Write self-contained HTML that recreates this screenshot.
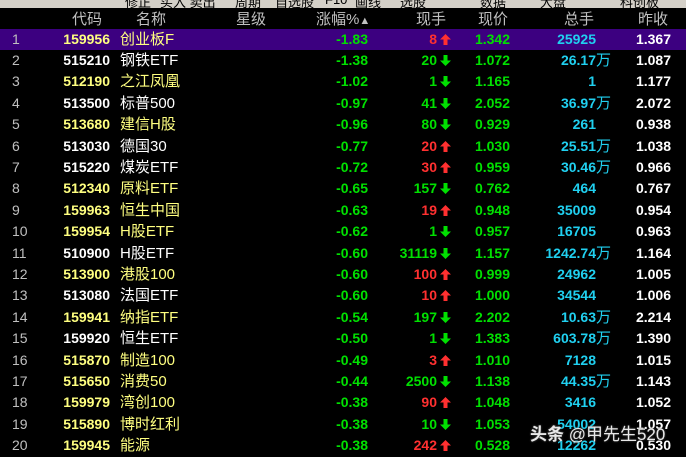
<!DOCTYPE html>
<html><head><style>
body{margin:0;width:686px;height:457px;background:#000;overflow:hidden;font-family:"Liberation Sans","Noto Sans CJK SC",sans-serif;position:relative}
.tb{position:absolute;left:0;top:0;width:686px;height:8px;background:#d4d0c8;overflow:hidden}
.tb span{position:absolute;top:-8px;font-size:13px;color:#000}
.hd{position:absolute;top:8px;height:20px;width:686px;color:#c0c0c0;font-size:15px}
.hd span,.r span{position:absolute;white-space:nowrap}
.r{position:absolute;left:0;width:686px;height:21.4px;font-size:14px;font-weight:bold;line-height:21px}
.sel{background:#3c0080}
.n{left:12px;color:#c0c0c0;font-weight:normal}
.c{right:576px}
.m{left:120px;font-weight:normal;font-size:15px}
.z{right:318px;color:#00e000}
.v{right:249px}
.r .a{left:440px;top:5px;line-height:0;height:11px}
.a svg{display:block}
.p{right:176px;color:#00e000}
.t{right:90px;color:#20d0f0}
.t2{left:596px;color:#20d0f0;font-weight:normal;font-size:15px}
.yc{right:15px;color:#fff}
.yl{color:#ffff80}.wh{color:#fff}
.up{color:#ff3030}.dn{color:#00e000}
</style></head><body>
<div class="tb"><span style="left:125px">修正</span><span style="left:160px">买入 卖出</span><span style="left:235px">周期</span><span style="left:275px">自选股</span><span style="left:325px">F10</span><span style="left:355px">画线</span><span style="left:400px">选股</span><span style="left:480px">数据</span><span style="left:540px">大盘</span><span style="left:620px">科创板</span></div>
<div class="hd"><span style="left:72px">代码</span><span style="left:136px">名称</span><span style="left:236px">星级</span><span style="left:316px">涨幅%<b style="font-size:11px">▲</b></span><span style="left:416px">现手</span><span style="left:478px">现价</span><span style="left:564px">总手</span><span style="left:638px">昨收</span></div>
<div id="rows"></div>
<script>
var d=[
[1,"159956","创业板F","yl","-1.83","8",1,"1.342","25925","","1.367"],
[2,"515210","钢铁ETF","wh","-1.38","20",0,"1.072","26.17","万","1.087"],
[3,"512190","之江凤凰","yl","-1.02","1",0,"1.165","1","","1.177"],
[4,"513500","标普500","wh","-0.97","41",0,"2.052","36.97","万","2.072"],
[5,"513680","建信H股","yl","-0.96","80",0,"0.929","261","","0.938"],
[6,"513030","德国30","wh","-0.77","20",1,"1.030","25.51","万","1.038"],
[7,"515220","煤炭ETF","wh","-0.72","30",1,"0.959","30.46","万","0.966"],
[8,"512340","原料ETF","yl","-0.65","157",0,"0.762","464","","0.767"],
[9,"159963","恒生中国","yl","-0.63","19",1,"0.948","35009","","0.954"],
[10,"159954","H股ETF","yl","-0.62","1",0,"0.957","16705","","0.963"],
[11,"510900","H股ETF","wh","-0.60","31119",0,"1.157","1242.74","万","1.164"],
[12,"513900","港股100","yl","-0.60","100",1,"0.999","24962","","1.005"],
[13,"513080","法国ETF","wh","-0.60","10",1,"1.000","34544","","1.006"],
[14,"159941","纳指ETF","yl","-0.54","197",0,"2.202","10.63","万","2.214"],
[15,"159920","恒生ETF","wh","-0.50","1",0,"1.383","603.78","万","1.390"],
[16,"515870","制造100","yl","-0.49","3",1,"1.010","7128","","1.015"],
[17,"515650","消费50","yl","-0.44","2500",0,"1.138","44.35","万","1.143"],
[18,"159979","湾创100","yl","-0.38","90",1,"1.048","3416","","1.052"],
[19,"515890","博时红利","yl","-0.38","10",0,"1.053","54002","","1.057"],
[20,"159945","能源","yl","-0.38","242",1,"0.528","12262","","0.530"]];
var UP='<svg width="11" height="11" viewBox="0 0 11 11"><path d="M5.5 0L11 5.5H7.5V11H3.5V5.5H0Z" fill="#ff3030"/></svg>';
var DN='<svg width="11" height="11" viewBox="0 0 11 11"><path d="M3.5 0H7.5V5.5H11L5.5 11L0 5.5H3.5Z" fill="#00e000"/></svg>';
var h="";d.forEach(function(r,i){var cl=r[6]?"up":"dn";h+='<div class="r'+(i==0?' sel':'')+'" style="top:'+(28.5+i*21.4)+'px"><span class="n">'+r[0]+'</span><span class="c '+r[3]+'">'+r[1]+'</span><span class="m '+r[3]+'">'+r[2]+'</span><span class="z">'+r[4]+'</span><span class="v '+cl+'">'+r[5]+'</span><span class="a">'+(r[6]?UP:DN)+'</span><span class="p">'+r[7]+'</span><span class="t">'+r[8]+'</span>'+(r[9]?'<span class="t2">万</span>':'')+'<span class="yc">'+r[10]+'</span></div>';});
document.getElementById("rows").innerHTML=h;
</script>
<div style="position:absolute;left:530px;top:420px;font-size:17px;color:#e8e8e8;text-shadow:0 0 2px #555"><b>头条</b> @甲先生520</div>
</body></html>
